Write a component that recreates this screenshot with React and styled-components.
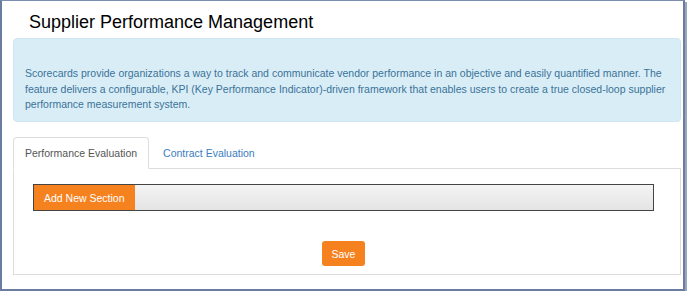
import React from 'react';
import styled, { createGlobalStyle } from 'styled-components';

const GlobalStyle = createGlobalStyle`
	body {
		margin: 0;
		background: #ffffff;
		font-family: Arial, "Liberation Sans", sans-serif;
	}
`;

const Frame = styled.div`
	box-sizing: border-box;
	width: 685px;
	height: 291px;
	border-left: 2px solid #6a7ca0;
	border-top: 1px solid #7d8db0;
	border-right: 2px solid #6a7ca0;
	border-bottom: 2px solid #6a7ca0;
	box-shadow: 2px 2px 0 #9aa6bd;
	padding: 0 2px 0 11px;
	background: #ffffff;
`;

const Title = styled.h1`
	margin: 0;
	padding: 10px 0 0 16px;
	height: 27px;
	font-size: 18px;
	font-weight: normal;
	color: #000;
	line-height: 22px;
`;

const InfoBox = styled.div`
	box-sizing: border-box;
	height: 84px;
	padding: 27px 12px 0 11px;
	background: #d9edf7;
	border: 1px solid #cfe6f1;
	border-radius: 4px;
	color: #3a7398;
	font-size: 10.5px;
	line-height: 15.5px;
	white-space: nowrap;
`;

const Tabs = styled.div`
	display: flex;
	gap: 2px;
	margin-top: 15px;
	height: 31px;
	border-bottom: 1px solid #dddddd;
`;

const Tab = styled.div`
	box-sizing: border-box;
	height: 32px;
	padding: 9px 11px 0 11px;
	font-size: 10.5px;
	color: ${p => (p.$active ? '#555555' : '#3b7dc0')};
	background: ${p => (p.$active ? '#fff' : 'transparent')};
	border: 1px solid ${p => (p.$active ? '#dddddd' : 'transparent')};
	border-bottom-color: ${p => (p.$active ? '#fff' : 'transparent')};
	border-radius: 4px 4px 0 0;
`;

const Panel = styled.div`
	box-sizing: border-box;
	height: 106px;
	border: 1px solid #dddddd;
	border-top: none;
	padding: 15px 26px 0 19px;
`;

const SectionBar = styled.div`
	display: flex;
	height: 27px;
	box-sizing: border-box;
	border: 1px solid #444;
	background: linear-gradient(#f4f4f4, #e4e4e4);
`;

const OrangeButton = styled.button`
	border: none;
	border-radius: ${p => p.$radius || '0'};
	background: #f6821f;
	color: #fff;
	font-family: Arial, "Liberation Sans", sans-serif;
	font-size: 10.5px;
	padding: 0 10px;
	height: 25px;
	cursor: pointer;
`;

const Footer = styled.div`
	display: flex;
	justify-content: center;
	padding-top: 30px;
`;

const App = () => (
	<>
		<GlobalStyle />
		<Frame>
			<Title>Supplier Performance Management</Title>
			<InfoBox>
				Scorecards provide organizations a way to track and communicate vendor performance in an objective and easily
				quantified manner. The
				<br />
				feature delivers a configurable, KPI (Key Performance Indicator)-driven framework that enables users to create a
				true closed-loop supplier
				<br />
				performance measurement system.
			</InfoBox>
			<Tabs>
				<Tab $active>Performance Evaluation</Tab>
				<Tab>Contract Evaluation</Tab>
			</Tabs>
			<Panel>
				<SectionBar>
					<OrangeButton>Add New Section</OrangeButton>
				</SectionBar>
				<Footer>
					<OrangeButton $radius="3px">Save</OrangeButton>
				</Footer>
			</Panel>
		</Frame>
	</>
);

export default App;
